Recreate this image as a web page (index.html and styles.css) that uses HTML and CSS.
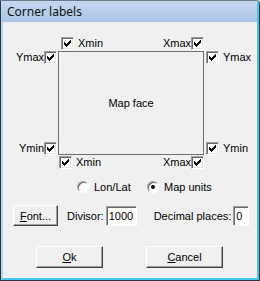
FILE: index.html
```html
<!DOCTYPE html>
<html>

<head>
  <link rel="stylesheet" href="styles.css">
  <title>Corner labels</title>
</head>

<body>
  <svg width="0" height="0" class="defs">
    <symbol id="tick" viewBox="0 0 7 7">
      <rect x="6" y="0" width="1" height="1"/>
      <rect x="5" y="1" width="2" height="1"/>
      <rect x="0" y="2" width="1" height="1"/>
      <rect x="4" y="2" width="3" height="1"/>
      <rect x="0" y="3" width="2" height="1"/>
      <rect x="3" y="3" width="3" height="1"/>
      <rect x="0" y="4" width="5" height="1"/>
      <rect x="1" y="5" width="3" height="1"/>
      <rect x="2" y="6" width="1" height="1"/>
    </symbol>
  </svg>

  <div class="dialog">
    <div class="titlebar">Corner labels</div>
    <div class="client">

      <div class="corners">
        <div class="row top">
          <label class="chk pad-l"><span class="box"><svg><use href="#tick"/></svg></span><span class="txt">Xmin</span></label>
          <label class="chk">Xmax<span class="box"><svg><use href="#tick"/></svg></span></label>
        </div>

        <div class="side left">
          <label class="chk">Ymax<span class="box"><svg><use href="#tick"/></svg></span></label>
          <label class="chk">Ymin<span class="box"><svg><use href="#tick"/></svg></span></label>
        </div>

        <div class="mapface">Map face</div>

        <div class="side right">
          <label class="chk"><span class="box"><svg><use href="#tick"/></svg></span><span class="txt">Ymax</span></label>
          <label class="chk"><span class="box"><svg><use href="#tick"/></svg></span><span class="txt">Ymin</span></label>
        </div>

        <div class="row bottom">
          <label class="chk pad-b"><span class="box"><svg><use href="#tick"/></svg></span><span class="txt">Xmin</span></label>
          <label class="chk">Xmax<span class="box"><svg><use href="#tick"/></svg></span></label>
        </div>
      </div>

      <div class="units">
        <label class="opt"><span class="radio"></span>Lon/Lat</label>
        <label class="opt"><span class="radio on"></span>Map units</label>
      </div>

      <div class="format">
        <button class="btn font-btn"><u>F</u>ont...</button>
        <span class="lbl divisor">Divisor:</span>
        <span class="edit wide">1000</span>
        <span class="lbl decimals">Decimal places:</span>
        <span class="edit narrow">0</span>
      </div>

      <div class="actions">
        <button class="btn big"><u>O</u>k</button>
        <button class="btn big"><u>C</u>ancel</button>
      </div>

    </div>
  </div>
</body>

</html>
```

FILE: styles.css
```css
html,
body {
  margin: 0;
  padding: 0;
  background: #f0f0f0;
}

.defs {
  position: absolute;
}

.dialog {
  width: 260px;
  height: 281px;
  box-sizing: border-box;
  border: 1px solid #2b3440;
  border-top-color: #6b7a8a;
  border-radius: 0 4px 0 0;
  background: #f0f0f0;
  font-family: "Liberation Sans", Arial, sans-serif;
  font-size: 11px;
  color: #000;
  display: flex;
  flex-direction: column;
  overflow: hidden;
}

.titlebar {
  height: 21px;
  padding-left: 6px;
  line-height: 21px;
  font-family: "Noto Sans", "Open Sans", sans-serif;
  font-size: 12px;
  color: #111;
  background: linear-gradient(#c5d8ee, #a9c5e5);
  border-right: 2px solid #40c8ee;
}

.client {
  flex: 1;
  border-left: 2px solid #bcd2ea;
  border-right: 2px solid #40c8ee;
  border-bottom: 2px solid #40c8ee;
  display: flex;
  flex-direction: column;
}

/* map face with the corner tick boxes */
.corners {
  margin-top: 14px;
  display: grid;
  grid-template-columns: 55px 146px 1fr;
  grid-template-rows: 15px 104px 16px;
}

.row {
  grid-column: 2;
  display: flex;
  justify-content: space-between;
  align-items: flex-start;
}

.row.top {
  grid-row: 1;
  padding-top: 1px;
}

.row.bottom {
  grid-row: 3;
  padding-top: 1px;
}

.pad-l {
  margin-left: 3px;
}

.pad-b {
  margin-left: 1px;
}

.side {
  grid-row: 2;
  display: flex;
  flex-direction: column;
  justify-content: space-between;
}

.side.left {
  grid-column: 1;
  align-items: flex-end;
  padding-right: 1px;
}

.side.right {
  grid-column: 3;
  align-items: flex-start;
  padding-left: 2px;
}

.mapface {
  grid-column: 2;
  grid-row: 2;
  border: 1px solid #6e6e6e;
  display: flex;
  align-items: center;
  justify-content: center;
}

.chk {
  display: flex;
  align-items: center;
  height: 13px;
  line-height: 13px;
}

.chk .txt {
  margin-left: 4px;
}

.box {
  width: 13px;
  height: 13px;
  box-sizing: border-box;
  background: #fff;
  border: 1px solid;
  border-color: #a0a0a0 #fff #fff #a0a0a0;
  box-shadow: inset 1px 1px #696969, inset -1px -1px #e3e3e3;
  display: flex;
  align-items: center;
  justify-content: center;
}

.box svg {
  width: 7px;
  height: 7px;
  fill: #000;
  shape-rendering: crispEdges;
}

/* coordinate units */
.units {
  margin-top: 9px;
  padding-left: 74px;
  display: flex;
  gap: 0;
  height: 13px;
}

.opt {
  display: flex;
  align-items: center;
  width: 70px;
}

.radio {
  width: 12px;
  height: 12px;
  box-sizing: border-box;
  border-radius: 50%;
  background: #fff;
  border: 1px solid;
  border-color: #a0a0a0 #fff #fff #a0a0a0;
  box-shadow: inset 1px 1px #696969;
  margin-right: 5px;
  position: relative;
}

.radio.on::after {
  content: "";
  position: absolute;
  left: 3px;
  top: 3px;
  width: 4px;
  height: 4px;
  border-radius: 50%;
  background: #000;
}

/* font and number format */
.format {
  margin-top: 12px;
  padding-left: 10px;
  display: flex;
  align-items: center;
  height: 21px;
}

.btn {
  font-family: "Liberation Sans", Arial, sans-serif;
  font-size: 11px;
  color: #000;
  background: #f0f0f0;
  border: 1px solid;
  border-color: #fff #404040 #404040 #fff;
  box-shadow: inset -1px -1px #a0a0a0;
  padding: 0;
  margin: 0;
}

.font-btn {
  width: 45px;
  height: 21px;
}

.lbl.divisor {
  margin-left: 9px;
}

.lbl.decimals {
  margin-left: 17px;
}

.edit {
  height: 20px;
  box-sizing: border-box;
  background: #fff;
  border: 1px solid;
  border-color: #a0a0a0 #fff #fff #a0a0a0;
  box-shadow: inset 1px 1px #696969;
  padding: 3px 0 0 2px;
  margin-left: 2px;
  line-height: 13px;
}

.edit.wide {
  width: 31px;
}

.edit.narrow {
  width: 16px;
}

.actions {
  margin-top: 20px;
  padding-left: 33px;
  display: flex;
  gap: 43px;
}

.btn.big {
  width: 67px;
  height: 22px;
}

.actions .btn.big + .btn.big {
  width: 77px;
}
```
